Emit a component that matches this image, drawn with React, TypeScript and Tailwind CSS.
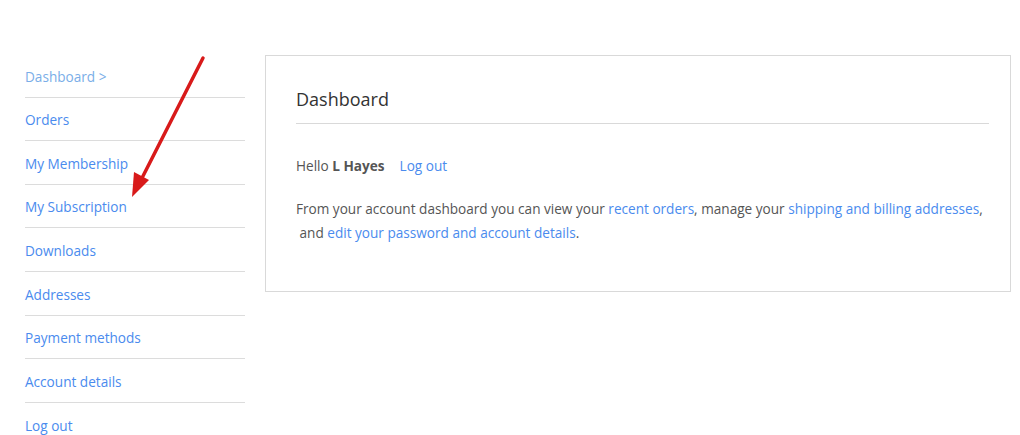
import React from 'react';

const NAV = [
  { label: 'Dashboard', active: true },
  { label: 'Orders' },
  { label: 'My Membership' },
  { label: 'My Subscription' },
  { label: 'Downloads' },
  { label: 'Addresses' },
  { label: 'Payment methods' },
  { label: 'Account details' },
  { label: 'Log out' },
];

// red annotation arrow drawn over the page
function Arrow() {
  return (
    <svg className="absolute left-0 top-0 pointer-events-none" width="260" height="220" viewBox="0 0 260 220">
      <line x1="203" y1="58" x2="141" y2="180" stroke="#d81a1a" strokeWidth="3.5" strokeLinecap="round" />
      <polygon points="132,197 134,172 149,180" fill="#d81a1a" />
    </svg>
  );
}

export default function App() {
  return (
    <div className="relative w-[1020px] h-[435px] bg-white overflow-hidden text-[13.6px] text-[#555]" style={{ fontFamily: '"Open Sans", sans-serif' }}>
      <div className="flex items-start pt-[55px] pl-[25px]">
        {/* Sidebar */}
        <nav className="w-[220px] -mt-[1px]">
          {NAV.map((item, i) => (
            <div key={item.label} className={`h-[43.6px] pt-[3px] flex items-center ${i < NAV.length - 1 ? 'border-b border-[#dcdcdc]' : ''}`}>
              <a href="#" className={item.active ? 'text-[#7aaee8]' : 'text-[#4a8bee]'}>
                {item.label}{item.active && ' >'}
              </a>
            </div>
          ))}
        </nav>

        {/* Content panel */}
        <div className="ml-[20px] w-[746px] h-[237px] border border-[#d9d9d9] pl-[30px] pr-[21px] pt-[30px]">
          <h2 className="text-[18px] text-[#333] pb-[10px] border-b border-[#d9d9d9]">Dashboard</h2>
          <p className="mt-[32px]">
            Hello <strong className="font-bold text-[#555]">L Hayes</strong>
            <a href="#" className="ml-[15px] text-[#4a8bee]">Log out</a>
          </p>
          <p className="mt-[21px] leading-[24px] whitespace-nowrap">
            From your account dashboard you can view your <a href="#" className="text-[#4a8bee]">recent orders</a>, manage your <a href="#" className="text-[#4a8bee]">shipping and billing addresses</a>,
            <br />
            &nbsp;and <a href="#" className="text-[#4a8bee]">edit your password and account details</a>.
          </p>
        </div>
      </div>
      <Arrow />
    </div>
  );
}
